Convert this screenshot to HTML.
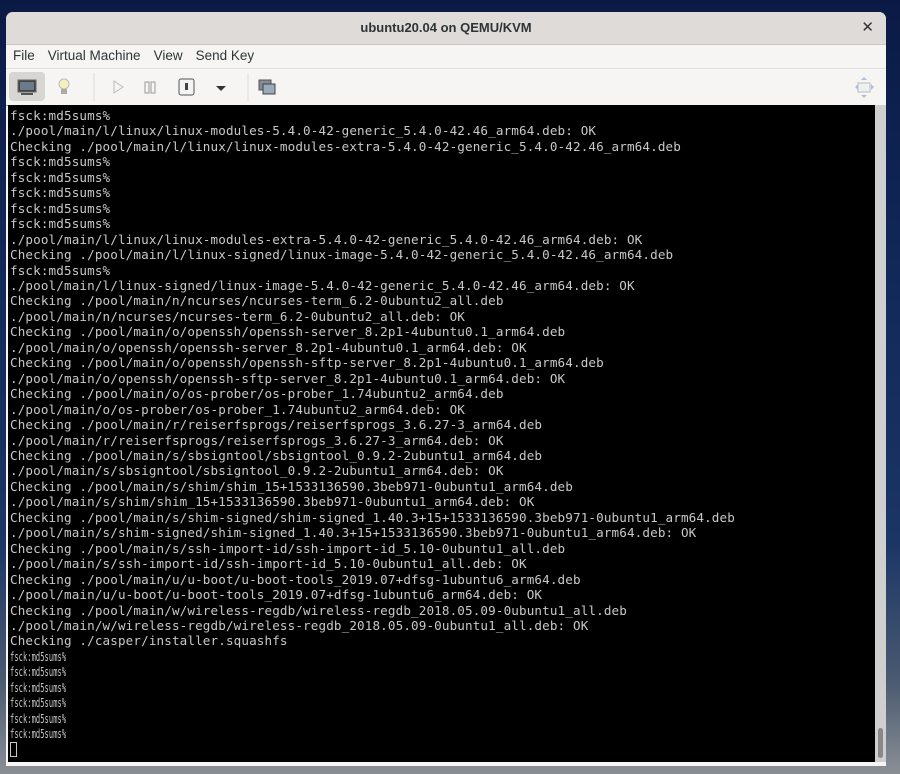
<!DOCTYPE html>
<html><head><meta charset="utf-8"><style>
html,body{margin:0;padding:0}
body{width:900px;height:774px;overflow:hidden;position:relative;
background:linear-gradient(180deg,#0b1a45 0%,#122a5c 40%,#1b3566 70%,#4a5a70 88%,#8a8f95 100%);}
.win{position:absolute;left:6px;top:12px;width:880px;height:754px;background:#f6f5f4;border-radius:7px 7px 0 0;overflow:hidden}
.title{height:32px;background:#dedbd8;border-bottom:1px solid #c8c4c0;text-align:center;font:bold 13px "Liberation Sans","DejaVu Sans",sans-serif;color:#2e3436;line-height:32px;position:relative}
.title .x{position:absolute;right:12px;top:0;font-size:15px;color:#333}
.menu{height:23px;border-bottom:1px solid #e2e0de;font:13.5px "Liberation Sans","DejaVu Sans",sans-serif;color:#2e3436;line-height:22px;padding-left:7px}
.menu span{margin-right:13px}
.tb{height:36px;position:relative;border-bottom:1px solid #999}
.term{position:absolute;left:2px;top:93px;width:867px;height:657px;background:#000;color:#c8c8c8;font:12.6px "DejaVu Sans Mono","Liberation Mono",monospace;letter-spacing:0.13px;line-height:15.45px;white-space:pre;padding:3px 0 0 2px;box-sizing:border-box;overflow:hidden}
.sb{position:absolute;left:869px;top:93px;width:11px;height:657px;background:#cfcfcf}
.sb i{position:absolute;left:3px;bottom:4px;width:5px;height:30px;background:#888;border-radius:3px}
.c{display:inline-block;transform:scaleX(.56);transform-origin:left}
</style></head><body>
<div class="win">
<div class="title">ubuntu20.04 on QEMU/KVM<span class="x">✕</span></div>
<div class="menu"><span>File</span><span>Virtual Machine</span><span>View</span><span>Send Key</span></div>
<div class="tb">
<div style="position:absolute;left:3px;top:3px;width:36px;height:29px;background:#d8d6d3;border-radius:4px"></div>
<svg width="880" height="36" style="position:absolute;left:0;top:0">
<rect x="12" y="11" width="18" height="12" fill="#444" stroke="#666"/><rect x="14" y="13" width="14" height="8" fill="#6a7a8a"/><rect x="15" y="24" width="12" height="2" fill="#555"/>
<circle cx="58" cy="15" r="5" fill="#f4f0c0" stroke="#bbb"/><rect x="55" y="20" width="6" height="5" fill="#aaa"/>
<line x1="88" y1="4" x2="88" y2="32" stroke="#ddd"/>
<path d="M108 12 L117 18 L108 24 Z" fill="none" stroke="#bbb"/>
<rect x="139" y="13" width="4" height="11" fill="none" stroke="#999"/><rect x="145" y="13" width="4" height="11" fill="none" stroke="#999"/>
<rect x="173" y="10" width="15" height="16" rx="2" fill="#f4f4f4" stroke="#555"/><rect x="179" y="14" width="3" height="7" fill="#444"/>
<path d="M210 17 L220 17 L215 22 Z" fill="#333"/>
<line x1="242" y1="4" x2="242" y2="32" stroke="#ddd"/>
<rect x="253" y="11" width="12" height="10" fill="#889" stroke="#555"/><rect x="257" y="15" width="12" height="10" fill="#9ab" stroke="#444"/>
<g fill="#a8c0e0"><rect x="852" y="14" width="12" height="9" fill="#f0f0f0" stroke="#bbb"/><path d="M858 8 L855 11 L861 11 Z"/><path d="M858 29 L855 26 L861 26 Z"/><path d="M849 18 L852 15 L852 21 Z"/><path d="M868 18 L865 15 L865 21 Z"/></g>
</svg></div>
<div class="term">fsck:md5sums%
./pool/main/l/linux/linux-modules-5.4.0-42-generic_5.4.0-42.46_arm64.deb: OK
Checking ./pool/main/l/linux/linux-modules-extra-5.4.0-42-generic_5.4.0-42.46_arm64.deb
fsck:md5sums%
fsck:md5sums%
fsck:md5sums%
fsck:md5sums%
fsck:md5sums%
./pool/main/l/linux/linux-modules-extra-5.4.0-42-generic_5.4.0-42.46_arm64.deb: OK
Checking ./pool/main/l/linux-signed/linux-image-5.4.0-42-generic_5.4.0-42.46_arm64.deb
fsck:md5sums%
./pool/main/l/linux-signed/linux-image-5.4.0-42-generic_5.4.0-42.46_arm64.deb: OK
Checking ./pool/main/n/ncurses/ncurses-term_6.2-0ubuntu2_all.deb
./pool/main/n/ncurses/ncurses-term_6.2-0ubuntu2_all.deb: OK
Checking ./pool/main/o/openssh/openssh-server_8.2p1-4ubuntu0.1_arm64.deb
./pool/main/o/openssh/openssh-server_8.2p1-4ubuntu0.1_arm64.deb: OK
Checking ./pool/main/o/openssh/openssh-sftp-server_8.2p1-4ubuntu0.1_arm64.deb
./pool/main/o/openssh/openssh-sftp-server_8.2p1-4ubuntu0.1_arm64.deb: OK
Checking ./pool/main/o/os-prober/os-prober_1.74ubuntu2_arm64.deb
./pool/main/o/os-prober/os-prober_1.74ubuntu2_arm64.deb: OK
Checking ./pool/main/r/reiserfsprogs/reiserfsprogs_3.6.27-3_arm64.deb
./pool/main/r/reiserfsprogs/reiserfsprogs_3.6.27-3_arm64.deb: OK
Checking ./pool/main/s/sbsigntool/sbsigntool_0.9.2-2ubuntu1_arm64.deb
./pool/main/s/sbsigntool/sbsigntool_0.9.2-2ubuntu1_arm64.deb: OK
Checking ./pool/main/s/shim/shim_15+1533136590.3beb971-0ubuntu1_arm64.deb
./pool/main/s/shim/shim_15+1533136590.3beb971-0ubuntu1_arm64.deb: OK
Checking ./pool/main/s/shim-signed/shim-signed_1.40.3+15+1533136590.3beb971-0ubuntu1_arm64.deb
./pool/main/s/shim-signed/shim-signed_1.40.3+15+1533136590.3beb971-0ubuntu1_arm64.deb: OK
Checking ./pool/main/s/ssh-import-id/ssh-import-id_5.10-0ubuntu1_all.deb
./pool/main/s/ssh-import-id/ssh-import-id_5.10-0ubuntu1_all.deb: OK
Checking ./pool/main/u/u-boot/u-boot-tools_2019.07+dfsg-1ubuntu6_arm64.deb
./pool/main/u/u-boot/u-boot-tools_2019.07+dfsg-1ubuntu6_arm64.deb: OK
Checking ./pool/main/w/wireless-regdb/wireless-regdb_2018.05.09-0ubuntu1_all.deb
./pool/main/w/wireless-regdb/wireless-regdb_2018.05.09-0ubuntu1_all.deb: OK
Checking ./casper/installer.squashfs
<span class="c">fsck:md5sums%</span>
<span class="c">fsck:md5sums%</span>
<span class="c">fsck:md5sums%</span>
<span class="c">fsck:md5sums%</span>
<span class="c">fsck:md5sums%</span>
<span class="c">fsck:md5sums%</span>
<span style="display:inline-block;width:7px;height:15px;border:1px solid #c8c8c8;box-sizing:border-box;vertical-align:-3px"></span></div>
<div class="sb"><i></i></div>
</div>
</body></html>
